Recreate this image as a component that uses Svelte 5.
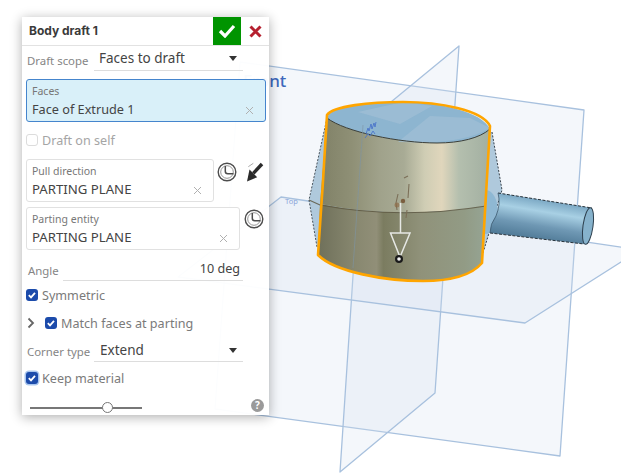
<script>
  const planes = [
    "240,62 584,110 560,456 215,409",
    "459,46 363,125 340,472 435,393",
    "281,197 640,250 525,323 178,277"
  ];
</script>

{#snippet clock()}
  <svg class="clock" width="20" height="20" viewBox="0 0 20 20">
    <circle cx="10" cy="10" r="8.8" fill="#fff" stroke="#4d4d4d" stroke-width="1.4"/>
    <circle cx="10" cy="10" r="6.3" fill="none" stroke="#8a8a8a" stroke-width=".9"/>
    <path d="M8.3 4v5.200a2.500 2.500 0 0 0 2.500 2.500H16.500" fill="none" stroke="#4d4d4d" stroke-width="1.500"/>
  </svg>
{/snippet}

{#snippet tick(focus)}
  <span class="cb" class:focus>
    <svg width="12" height="12" viewBox="0 0 12 12"><path d="M2.800 6.200l2.200 2.200 4-4.600" fill="none" stroke="#fff" stroke-width="1.800"/></svg>
  </span>
{/snippet}

{#snippet caret()}
  <svg class="caret" width="8" height="5" viewBox="0 0 8 5"><path d="M0 0h8L4 5z" fill="#333"/></svg>
{/snippet}

{#snippet clear()}
  <svg class="clear" width="9" height="9" viewBox="0 0 9 9"><path d="M1 1l7 7M8 1l-7 7" stroke="#b0b0b0" stroke-width="1"/></svg>
{/snippet}

<div class="scene">
  <svg class="canvas" width="621" height="476" viewBox="0 0 621 476">
    <defs>
      <linearGradient id="upper" x1="318" x2="490" y1="0" y2="0" gradientUnits="userSpaceOnUse">
        <stop offset="0" stop-color="#7f8066"/>
        <stop offset=".2" stop-color="#8f9076"/>
        <stop offset=".36" stop-color="#a0a28b"/>
        <stop offset=".5" stop-color="#a8ab95"/>
        <stop offset=".62" stop-color="#cfcdb4"/>
        <stop offset=".72" stop-color="#e0d6bc"/>
        <stop offset=".82" stop-color="#b4bfae"/>
        <stop offset="1" stop-color="#a2afa1"/>
      </linearGradient>
      <linearGradient id="lower" x1="318" x2="490" y1="0" y2="0" gradientUnits="userSpaceOnUse">
        <stop offset="0" stop-color="#6f705a"/>
        <stop offset=".22" stop-color="#888870"/>
        <stop offset=".34" stop-color="#918f78"/>
        <stop offset=".38" stop-color="#7b7c60"/>
        <stop offset=".6" stop-color="#90927a"/>
        <stop offset=".85" stop-color="#929b85"/>
        <stop offset="1" stop-color="#96a697"/>
      </linearGradient>
      <linearGradient id="boss" x1="502" y1="190" x2="494" y2="238" gradientUnits="userSpaceOnUse">
        <stop offset="0" stop-color="#6f9dbb"/>
        <stop offset=".3" stop-color="#a8d0e4"/>
        <stop offset=".6" stop-color="#6f98b4"/>
        <stop offset="1" stop-color="#446f8c"/>
      </linearGradient>
    </defs>

    {#each planes as p}
      <polygon points={p} fill="#d3dff0" fill-opacity=".26" stroke="#a8c1de" stroke-width="1.300" stroke-linejoin="round"/>
    {/each}
    <text x="243" y="87" class="plane-label">Front</text>
    <text x="285" y="204" class="plane-small">Top</text>

    <!-- cone behind the body -->
    <path d="M327 118L309 200 317 247 340 262 482 262 483 253 502 190 492 132Z" fill="#afc9dc"/>
    <path d="M327 118L309 200 317 247" fill="none" stroke="#4a545c" stroke-width="1" stroke-dasharray="2 1.500"/>
    <path d="M492 132L502 190 483 253" fill="none" stroke="#39434c" stroke-width="1" stroke-dasharray="2 1.500"/>

    <!-- boss -->
    <ellipse cx="486" cy="212" rx="12" ry="22" fill="#8fb8d3"/>
    <path d="M498 193L592 208 584 244 490 233Q490 224 496 216Q501 204 498 193Z" fill="url(#boss)"/>
    <path d="M498 193L592 208M490 233L584 244" fill="none" stroke="#27323a" stroke-width="1" stroke-dasharray="3 1.500"/>
    <path d="M498 193Q501 204 496 216Q490 224 490 233" fill="none" stroke="#3d5a70" stroke-width=".8"/>
    <ellipse cx="588" cy="226" rx="5" ry="18.500" transform="rotate(8 588 226)" fill="#86b2cc" stroke="#2c3e4c" stroke-width="1"/>

    <!-- body -->
    <path d="M327 118C345 132 400 143 437 143C460 143 480 138 490 129L486 206Q400 220 320 204Z" fill="url(#upper)"/>
    <path d="M320 204Q400 220 486 206L482 263C470 277 445 281 423 281C385 281 335 272 318 255Z" fill="url(#lower)"/>
    <path d="M327 118C329 106 370 102 403 102C440 102 482 112 490 129C480 138 460 143 437 143C400 143 345 132 327 118Z" fill="#8db5d0"/>
    <path d="M398 142L430 116 470 118 490 128C470 140 440 144 398 142ZM358 112L403 102 432 106 400 124Z" fill="#a3c0d6" fill-opacity=".65"/>
    <path d="M327 118C345 132 400 143 437 143C460 143 480 138 490 129" fill="none" stroke="#3c3f38" stroke-width="1"/>
    <path d="M309 200L320 205Q400 220 486 206" fill="none" stroke="#5e5842" stroke-width="1.200" opacity=".85"/>
    <path d="M363 125L353 268" stroke="#7d94a5" stroke-width="1" fill="none" opacity=".6"/>
    <path d="M318 255Q323 185 327 115C333 106 370 102 403 102C440 102 482 110 490 126L482 263C470 277 445 281 423 281C385 281 335 272 318 255Z" fill="none" stroke="#ffa500" stroke-width="2.600" stroke-linejoin="round"/>

    <!-- inference marks -->
    <path d="M366 134l2-6 1 3 2-7 1 5 2-6 1 4 1-5M365 138l3-4 2 2 3-5 2 3" fill="none" stroke="#4b75c9" stroke-width=".9"/>
    <path d="M404 178l4-2M409 184l-1 14M398 194l-2 9 1 7M407 210l-1 8" fill="none" stroke="#7b6f58" stroke-width="1.100"/>
    <circle cx="403" cy="201" r="2.200" fill="#7b5f40"/>
    <circle cx="397" cy="205" r="2.500" fill="#8e6c48" opacity=".7"/>

    <!-- arrow -->
    <path d="M400.500 203V233M390.500 233H410L400 257Z" fill="none" stroke="#e6e8e4" stroke-width="1.500" stroke-linejoin="miter"/>
    <circle cx="399" cy="259" r="4" fill="#1a1a1a"/>
    <circle cx="399" cy="259" r="1.800" fill="#f4f4f4"/>
  </svg>

  <section class="panel">
    <header>
      <h1>Body draft 1</h1>
      <button class="ok" aria-label="Accept">
        <svg width="18" height="14" viewBox="0 0 18 14"><path d="M2 7l5 5 9-10" fill="none" stroke="#fff" stroke-width="3.200"/></svg>
      </button>
      <button class="no" aria-label="Cancel">
        <svg width="13" height="13" viewBox="0 0 13 13"><path d="M1.500 1.500l10 10M11.500 1.500l-10 10" stroke="#b5202f" stroke-width="3"/></svg>
      </button>
    </header>

    <div class="row select r-scope">
      <span class="lab">Draft scope</span>
      <div class="field"><span>Faces to draft</span>{@render caret()}</div>
    </div>

    <div class="box active">
      <small>Faces</small>
      <div class="val"><span class="face">Face of Extrude 1</span>{@render clear()}</div>
    </div>

    <label class="check r-self">
      <span class="cb off"></span><span class="dim">Draft on self</span>
    </label>

    <div class="boxrow r-pull">
      <div class="box w188">
        <small>Pull direction</small>
        <div class="val"><span>PARTING PLANE</span>{@render clear()}</div>
      </div>
      {@render clock()}
      <svg class="flip" width="22" height="22" viewBox="0 0 22 22">
        <path d="M4.500 8.500L12.200 16.200 2 20.500Z" fill="#2b2b2b"/>
        <path d="M8.300 12.300L17 3" stroke="#2b2b2b" stroke-width="3.400"/>
        <path d="M3.300 5.700L8.300 2.300" stroke="#aaa" stroke-width="1"/>
      </svg>
    </div>

    <div class="boxrow r-part">
      <div class="box w214">
        <small>Parting entity</small>
        <div class="val"><span>PARTING PLANE</span>{@render clear()}</div>
      </div>
      {@render clock()}
    </div>

    <div class="row r-angle">
      <span class="lab">Angle</span>
      <div class="field num">10 deg</div>
    </div>

    <label class="check r-sym">{@render tick(false)}<span>Symmetric</span></label>

    <div class="check r-match">
      <svg class="chev" width="8" height="12" viewBox="0 0 8 12"><path d="M1.500 1.500L6 6l-4.500 4.500" fill="none" stroke="#666" stroke-width="1.800"/></svg>
      {@render tick(false)}<span>Match faces at parting</span>
    </div>

    <div class="row select r-corner">
      <span class="lab">Corner type</span>
      <div class="field"><span>Extend</span>{@render caret()}</div>
    </div>

    <label class="check r-keep">{@render tick(true)}<span>Keep material</span></label>

    <div class="foot">
      <div class="slider"><span class="thumb"></span></div>
      <span class="help">?</span>
    </div>
  </section>
</div>

<style>
  :global(body) { margin: 0; background: #fff; }
  .scene {
    position: relative;
    width: 621px;
    height: 476px;
    overflow: hidden;
    padding: 17px 0 0 22px;
    box-sizing: border-box;
    font-family: "Noto Sans", Inter, sans-serif;
  }
  .canvas { position: absolute; left: 0; top: 0; }
  .plane-label { font: 500 17px "Noto Sans", sans-serif; fill: #3f68bb; }
  .plane-small { font: 7.500px "Noto Sans", sans-serif; fill: #8aa5d8; }

  .panel {
    position: relative;
    width: 247px;
    height: 398px;
    background: rgba(255, 255, 255, .965);
    box-shadow: 0 2px 11px rgba(0, 0, 0, .32);
    color: #444;
    font-size: 13.5px;
    display: flex;
    flex-direction: column;
    padding-left: 4px;
    box-sizing: border-box;
  }
  header {
    display: flex;
    height: 28px;
    margin-left: -4px;
    border-bottom: 1px solid #e2e2e2;
    align-items: stretch;
    box-sizing: content-box;
  }
  h1 {
    margin: 0;
    flex: 1;
    padding-left: 7px;
    font-family: Inter, sans-serif;
    font-size: 12px;
    font-weight: 700;
    line-height: 28px;
    color: #3a3a3a;
  }
  button { border: 0; padding: 0; display: flex; align-items: center; justify-content: center; }
  .ok { width: 28px; background: #009400; }
  .no { width: 28px; background: transparent; }

  .row { display: flex; align-items: flex-end; width: 216px; }
  .lab { color: #858585; font-size: 11.400px; line-height: 16px; white-space: nowrap; flex: none; }
  .field {
    display: flex;
    align-items: flex-end;
    justify-content: space-between;
    flex: 1;
    line-height: 18px;
    color: #444;
    border-bottom: 1px solid #ddd;
    box-sizing: border-box;
  }
  .caret { margin-bottom: 6px; }
  .r-scope { height: 25px; margin-left: 1px; }
  .r-scope .lab { width: 67px; margin-bottom: 2px; }
  .select .field { height: 24px; padding: 0 6px 3px 5px; }
  .r-scope .field { height: 25px; }

  .box {
    box-sizing: border-box;
    height: 43px;
    border: 1px solid #e1e1e1;
    border-radius: 3px;
    padding: 4px 5px 0;
    background: #fff;
  }
  .box small { display: block; font-size: 10.500px; line-height: 14px; color: #777; }
  .val { display: flex; align-items: center; justify-content: space-between; line-height: 19px; padding-right: 6px; margin-top: 2px; font-size: 13.200px; color: #444; }
  .face { font-size: 12.700px; }
  .clear { flex: none; margin-top: 2px; }
  .active {
    width: 240px;
    margin-top: 8px;
    background: #d9f0f9;
    border: 1.500px solid #4585cd;
  }
  .check { display: flex; align-items: center; gap: 4px; height: 16px; }
  .check span:last-child:not(.cb) { color: #7a7a7a; font-size: 12.600px; }
  .check span.dim:last-child { color: #a5a5a5; }
  .cb {
    width: 12px;
    height: 12px;
    border-radius: 3px;
    background: #1c4bab;
    display: flex;
    flex: none;
    box-sizing: border-box;
  }
  .cb.off { background: #fff; border: 1px solid #dcdcdc; }
  .cb.focus { box-shadow: 0 0 0 1.500px #a9c6ee; }
  .r-self { margin-top: 10px; }
  .boxrow { display: flex; align-items: flex-start; }
  .clock { flex: none; margin: 3px 0 0 3px; }
  .flip { flex: none; margin: 2px 0 0 8px; }
  .r-pull { margin-top: 11px; }
  .r-part { margin-top: 5px; }
  .r-part .clock { margin: 2px 0 0 4px; }
  .w188 { width: 188px; }
  .w214 { width: 214px; }

  .r-angle { height: 24px; margin: 7px 0 0 2px; width: 215px; }
  .r-angle .lab { width: 35px; margin-bottom: 2px; }
  .num { justify-content: flex-end; height: 24px; padding: 0 3px 2px 0; font-size: 12.600px; }
  .r-sym { margin-top: 6px; }
  .r-match { margin-top: 12px; }
  .chev { margin: 0 6px 0 1px; flex: none; }
  .r-corner { height: 24px; margin: 7px 0 0 1px; }
  .r-corner .lab { width: 67px; margin-bottom: 2px; }
  .r-corner .field { padding: 0 6px 2px 6px; }
  .r-keep { margin-top: 8px; }
  .foot { display: flex; justify-content: space-between; align-items: center; margin-top: 13px; padding: 0 5px 0 4px; }
  .slider { position: relative; width: 112px; height: 1.500px; background: #777; margin-top: 5px; }
  .thumb {
    position: absolute;
    left: 72px;
    top: -5px;
    width: 11px;
    height: 11px;
    border-radius: 50%;
    background: #fff;
    border: 1px solid #777;
    box-sizing: border-box;
  }
  .help {
    width: 13px;
    height: 13px;
    border-radius: 50%;
    background: #9a9a9a;
    color: #fff;
    font-size: 10px;
    font-weight: 700;
    line-height: 13px;
    text-align: center;
  }
</style>
